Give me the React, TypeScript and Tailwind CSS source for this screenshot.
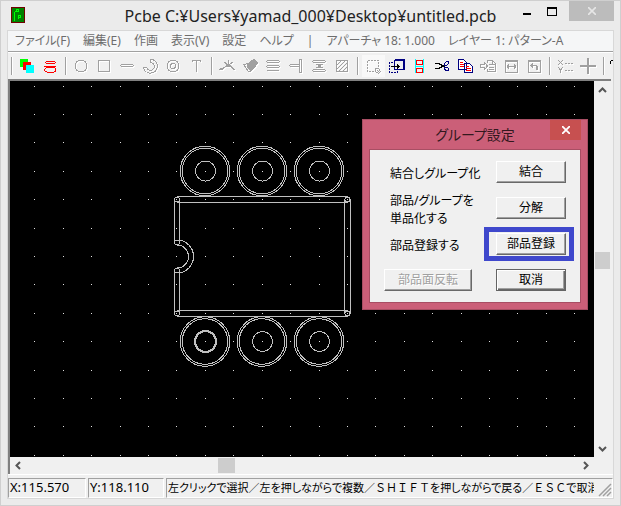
import type { ReactNode } from "react";

const MENUS = ["ファイル(F)", "編集(E)", "作画", "表示(V)", "設定", "ヘルプ"];

// Grid points every 2.54mm at the current zoom.
const GRID = Array.from({ length: 20 }, (_, i) => Math.floor(34.8 + 28.42 * i) - 10);
const GRID_ROWS = Array.from({ length: 14 }, (_, i) => Math.floor(5 + 28.4 * i));

const PAD_X = [195, 252, 309];

export default function App() {
  return (
    <div className="flex min-h-screen flex-col border border-[#cfcfcf] bg-[#ebebeb] px-1.5 pb-1.5 font-['Noto_Sans','Noto_Sans_CJK_JP',sans-serif] text-xs [font-feature-settings:'palt']">
      <TitleBar />
      <main className="flex flex-1 flex-col border border-[#d8d8d8] bg-[#f0f0f0]">
        <MenuBar />
        <Toolbar />
        <section className="mr-0.5 flex flex-1 flex-col border-t-2 border-l-2 border-[#808080]">
          <div className="flex flex-1">
            <Board />
            <VerticalScroll />
          </div>
          <HorizontalScroll />
        </section>
        <StatusBar />
      </main>
    </div>
  );
}

function TitleBar() {
  return (
    <header className="relative flex h-[29px] items-center justify-center">
      <svg className="absolute top-1.5 left-1 h-4 w-3.5" viewBox="0 0 14 16" shapeRendering="crispEdges">
        <rect width="14" height="16" fill="#700000" />
        <rect x="1" y="1" width="12" height="14" fill="#008000" />
        <g fill="none" stroke="#00ff00">
          <path d="M3.5 14V5.5L5.5 3.5M5.5 2.5h2v2h-2zM7.5 12V8.5h2v2h-2" />
        </g>
      </svg>
      <h1 className="text-base whitespace-nowrap text-[#222]">Pcbe C:¥Users¥yamad_000¥Desktop¥untitled.pcb</h1>
      <div className="absolute top-0 right-0 flex h-5 text-black">
        <button aria-label="最小化" className="flex w-6 justify-center">
          <svg className="h-5 w-3" viewBox="0 0 12 20" shapeRendering="crispEdges">
            <rect x="4" y="12" width="8" height="2" />
          </svg>
        </button>
        <button aria-label="最大化" className="mr-1 flex w-7 justify-center">
          <svg className="h-5 w-3" viewBox="0 0 12 20" shapeRendering="crispEdges">
            <path d="M2 6h10v9H2zM3 8v6h8V8z" fillRule="evenodd" />
          </svg>
        </button>
        <button aria-label="閉じる" className="flex w-[45px] items-center justify-center bg-[#bcbcbc]">
          <svg className="size-2" viewBox="0 0 8 8" stroke="#e6e6e6" strokeWidth="1.6">
            <path d="M0 0l8 8M8 0L0 8" />
          </svg>
        </button>
      </div>
    </header>
  );
}

function MenuBar() {
  return (
    <nav className="flex h-5 items-center gap-[13px] overflow-hidden bg-[#f5f6f7] pl-[7px] whitespace-nowrap text-[#6d6d6d]">
      {MENUS.map((m) => (
        <button key={m}>{m}</button>
      ))}
      <span>|</span>
      <button>アパーチャ 18: 1.000</button>
      <button>レイヤー 1: パターン-A</button>
    </nav>
  );
}

function Toolbar() {
  return (
    <div role="toolbar" className="flex h-7 items-center overflow-hidden border-t border-[#a0a0a0] shadow-[inset_0_1px_0_#fff]">
      <Sep />
      <Tool label="レイヤー">
        <rect x="4" y="4" width="8" height="8" fill="#00ff00" stroke="none" />
        <rect x="7" y="7" width="8" height="8" fill="#ff0000" stroke="none" />
        <rect x="10" y="10" width="8" height="8" fill="#00ffff" stroke="none" />
      </Tool>
      <Tool label="アパーチャ">
        <path
          stroke="#ff0000"
          d="M7 6.5h9M6 7.5h1M16 7.5h1M7 8.5h9M5 11.5h12M7 12.5h9M5.5 14v2M16.5 14v2M6 13.5h1M16 13.5h1M6 16.5h2M15 16.5h2M8 17.5h7"
        />
      </Tool>
      <Sep />
      <Tool label="円" off>
        <circle cx="11" cy="11" r="6" />
      </Tool>
      <Tool label="四角" off>
        <path d="M5.5 5.5h11v11h-11z" />
      </Tool>
      <Tool label="線" off>
        <path d="M5 9.5h12M5 11.5h12M4.5 10v1M17.5 10v1" />
      </Tool>
      <Tool label="円弧" off>
        <path d="M11.5 4.5h2a7 7 0 1 1 -9 8h3a4 4 0 1 0 5 -5h-1z" />
      </Tool>
      <Tool label="ランド" off>
        <circle cx="11" cy="11" r="6" />
        <circle cx="11" cy="11" r="2.5" />
      </Tool>
      <Tool label="文字" off>
        <path d="M7 5.5h9M11.5 5v12M7.5 6v1M15.5 6v1" />
      </Tool>
      <Sep />
      <Tool label="切断" off>
        <path d="M3 14.5h4M4 13.5h4M7 12.5h2M9 11.5h7M10 10.5h5M11 9.5h3M12.5 5v5M15 12.5h2M16 13.5h2M17 14.5h2M8 7l4 3M17 7l-4 3" />
      </Tool>
      <Tool label="消去" off>
        <path fill="currentColor" d="M9 9l6 -5 4 4 -7 8 -4 -4z" />
        <path d="M4.5 9.5l5 -1 2 5 0 3 -2 0z" />
      </Tool>
      <Tool label="平行線" off>
        <path d="M5 5.5h12M5 7.5h12M5 10.5h12M5 12.5h12M5 15.5h12M4.5 6v1M17.5 6v1M4.5 11v1M17.5 11v1" />
      </Tool>
      <Tool label="直角" off>
        <path d="M14.5 4.5h2v13h-2zM5 9.5h9M5 11.5h9M4.5 10v1" />
      </Tool>
      <Tool label="間隔" off>
        <path d="M5 5.5h12M5 7.5h12M4.5 6v1M17.5 6v1M5 14.5h12M5 16.5h12M4.5 15v1M17.5 15v1M8 9.5h7M10 10.5h3M10 11.5h3M8 12.5h7" />
      </Tool>
      <Tool label="塗り" off>
        <path d="M5.5 5.5h11v11h-11zM6 10l4 -4M6 14l8 -8M8 16l8 -8M12 16l4 -4" />
      </Tool>
      <Sep />
      <Tool label="選択" off pressed>
        <path strokeDasharray="2 1" d="M5.5 5.5h11v8M5.5 5.5v11h7" />
        <path d="M13.5 13.5h3l2 3 -2 2 -3 -2zM15 15l3 3" />
      </Tool>
      <Tool label="移動">
        <path stroke="#000080" d="M9.5 5.5h9v9h-9zM10 4.5h9v10" />
        <path stroke="#000080" strokeDasharray="2 1" d="M8 7.5H4.5v10h8v-2" />
        <path stroke="#000" d="M6 11.5h9M12.5 9v5M13.5 10v3" />
      </Tool>
      <Tool label="グループ">
        <path stroke="#00ffff" d="M7.5 4v14M15.5 4v14M8 11.5h7" />
        <path stroke="#ff0000" d="M8.5 5.5h6v4h-6zM8.5 13.5h6v4h-6z" />
      </Tool>
      <Tool label="切り取り">
        <path stroke="#000" strokeWidth="1.5" d="M4 8.5h4l3 2 3 1M4 13.5h4l3 -2 3 -1" />
        <path stroke="#000080" d="M13.5 10.5v-2l2 -2h2v2l-2 2zM13.5 12.5h3l1 1v2h-3l-1 -2z" />
      </Tool>
      <Tool label="コピー">
        <path fill="#fff" stroke="#000080" d="M4.5 4.5h5l3 3v7h-8zM10.5 8.5h5l3 3v6h-8z" />
        <path stroke="#ff0000" d="M6 7.5h3M6 9.5h4M6 11.5h4M12 11.5h3M12 13.5h5M12 15.5h5" />
      </Tool>
      <Tool label="貼り付け" off>
        <path d="M3.5 9.5h4v-2l3 3.5 -3 3.5v-2h-4zM10.5 8v-2.5h5l3 3v8h-8v-3M12 9.5h3M12 12.5h5M12 14.5h5M15.5 6v3h3" />
      </Tool>
      <Tool label="左右反転" off>
        <path d="M5.5 5.5h12v12h-12zM5 6.5h13M7 11.5h9M8.5 9v5M14.5 9v5M7.5 10v3M15.5 10v3" />
      </Tool>
      <Tool label="回転" off>
        <path d="M5.5 5.5h12v12h-12zM5 6.5h13M7 10.5h7M8.5 9v3M9.5 8v5M14.5 11v4M13.5 10v5" />
      </Tool>
      <Sep />
      <Tool label="座標" off>
        <path d="M4 5l5 5M9 5l-5 5M4 12l2.5 3M9 12l-2.5 3v3" />
        <path strokeDasharray="2 1" d="M11 8.5h8M11 15.5h8" />
      </Tool>
      <Tool label="原点" off>
        <path strokeWidth="2" d="M3 11h16M11 3v16" />
      </Tool>
      <Sep />
      <Tool label="ズーム">
        <path stroke="#000" d="M3 5.5h4M2.5 6v3M7.5 6v3" />
      </Tool>
    </div>
  );
}

function Sep() {
  return <span className="mx-[3px] h-[18px] w-0.5 shrink-0 border-r border-l border-r-white border-l-[#a0a0a0]" />;
}

function Tool({
  label,
  off = false,
  pressed = false,
  children,
}: {
  label: string;
  off?: boolean;
  pressed?: boolean;
  children: ReactNode;
}) {
  return (
    <button aria-label={label} className={pressed ? "h-[22px] w-[23px] shrink-0 bg-[#f8f8f8]" : "h-[22px] w-[23px] shrink-0"}>
      <svg className="h-[22px] w-[23px]" viewBox="0 0 23 22" fill="none" shapeRendering="crispEdges">
        {off && (
          <g className="text-white" stroke="currentColor" transform="translate(1 1)">
            {children}
          </g>
        )}
        <g className="text-[#a0a0a0]" stroke="currentColor">
          {children}
        </g>
      </svg>
    </button>
  );
}

function Board() {
  return (
    <div className="relative min-h-[376px] min-w-0 flex-1 overflow-hidden bg-black">
      <svg className="absolute inset-0 size-full" fill="none" stroke="#c0c0c0" shapeRendering="crispEdges">
        <g fill="#e0e0e0" stroke="none">
          {GRID_ROWS.map((y) => GRID.map((x) => <rect key={`${x},${y}`} x={x} y={y} width="1" height="1" />))}
        </g>
        {PAD_X.map((x) => (
          <g key={x}>
            <Pad x={x} y={90} />
            <Pad x={x} y={260.5} />
          </g>
        ))}
        <circle cx="195.5" cy="260.5" r="11" />
        {/* package outline, drawn as 6px wide strokes */}
        <path d="M167 115.5h171M167 121.5h171M167 229.5h171M167 235.5h171M334.5 118v115M340.5 118v115" />
        <path d="M164.5 118v44M169.5 118v44M164.5 189v44M169.5 189v44" />
        <circle cx="167" cy="118.5" r="2.5" />
        <circle cx="337.5" cy="118.5" r="2.5" />
        <circle cx="167" cy="232.5" r="2.5" />
        <circle cx="337.5" cy="232.5" r="2.5" />
        <circle cx="167" cy="161.5" r="2.5" />
        <circle cx="167" cy="189.5" r="2.5" />
        <path d="M167 159a16.5 16.5 0 0 1 0 33M167 164a11.5 11.5 0 0 1 0 23" />
      </svg>
      <GroupDialog />
    </div>
  );
}

function Pad({ x, y }: { x: number; y: number }) {
  return (
    <>
      <circle cx={x} cy={y} r="24.8" />
      <circle cx={x} cy={y} r="22.8" />
      <circle cx={x + 0.5} cy={y} r="10" />
    </>
  );
}

function GroupDialog() {
  return (
    <div
      role="dialog"
      aria-labelledby="group-title"
      className="absolute top-[38px] left-[352px] w-[226px] border border-[#a84e63] bg-[#cb5f78] px-1.5 pb-1.5"
    >
      <div className="relative flex h-[29px] items-center justify-center">
        <h2 id="group-title" className="text-sm text-[#33181e]">
          グループ設定
        </h2>
        <button aria-label="閉じる" className="absolute top-0 right-0 flex h-5 w-[31px] items-center justify-center bg-[#c75050]">
          <svg className="size-2" viewBox="0 0 8 8" stroke="#fff" strokeWidth="1.8">
            <path d="M0 0l8 8M8 0L0 8" />
          </svg>
        </button>
      </div>
      <div className="flex flex-col border border-[#a84e63] bg-[#f0f0f0] py-1 leading-[18px] text-black">
        <Row label="結合しグループ化">
          <DialogButton>結合</DialogButton>
        </Row>
        <Row
          label={
            <>
              部品/グループを
              <br />
              単品化する
            </>
          }
        >
          <DialogButton>分解</DialogButton>
        </Row>
        <Row label="部品登録する">
          <div className="relative">
            <DialogButton>部品登録</DialogButton>
            <span className="pointer-events-none absolute -top-1.5 -right-2 -bottom-1.5 -left-3 border-5 border-[#3f48cc]" />
          </div>
        </Row>
        <div className="flex h-9 items-center justify-between px-3.5">
          <button
            disabled
            className="flex h-[22px] w-[88px] items-center justify-center border border-t-white border-r-[#696969] border-b-[#696969] border-l-white text-[#a0a0a0] shadow-[inset_-1px_-1px_0_#a0a0a0] [text-shadow:1px_1px_0_#fff]"
          >
            部品面反転
          </button>
          <button className="flex h-[22px] w-[70px] items-center justify-center border border-[#646464] shadow-[inset_1px_1px_0_#fff,inset_-1px_-1px_0_#696969,inset_-2px_-2px_0_#a0a0a0]">
            取消
          </button>
        </div>
      </div>
    </div>
  );
}

function Row({ label, children }: { label: ReactNode; children: ReactNode }) {
  return (
    <div className="flex h-9 items-center justify-between pr-3.5 pl-5">
      <span className="pt-1 whitespace-nowrap">{label}</span>
      {children}
    </div>
  );
}

function DialogButton({ children }: { children: ReactNode }) {
  return (
    <button className="flex h-[22px] w-[70px] items-center justify-center border border-t-white border-r-[#696969] border-b-[#696969] border-l-white shadow-[inset_-1px_-1px_0_#a0a0a0]">
      {children}
    </button>
  );
}

function Chevron({ d }: { d: string }) {
  return (
    <svg className="size-[17px]" viewBox="0 0 17 17" fill="none" stroke="#555" strokeWidth="2">
      <path d={d} />
    </svg>
  );
}

function VerticalScroll() {
  return (
    <div className="flex w-[17px] flex-col items-center bg-[#f0f0f0]">
      <button aria-label="上へ">
        <Chevron d="M5 11l3.5 -3.5 3.5 3.5" />
      </button>
      <div className="flex-[154]" />
      <div className="h-[17px] w-[15px] bg-[#cdcdcd]" />
      <div className="flex-[171]" />
      <button aria-label="下へ">
        <Chevron d="M5 7l3.5 3.5 3.5 -3.5" />
      </button>
    </div>
  );
}

function HorizontalScroll() {
  return (
    <div className="mr-[17px] flex h-[17px] items-center bg-[#f0f0f0]">
      <button aria-label="左へ">
        <Chevron d="M10 5l-3.5 3.5 3.5 3.5" />
      </button>
      <div className="flex-[191]" />
      <div className="h-[15px] w-[17px] bg-[#cdcdcd]" />
      <div className="flex-[342]" />
      <button aria-label="右へ">
        <Chevron d="M7 5l3.5 3.5 -3.5 3.5" />
      </button>
    </div>
  );
}

function StatusBar() {
  return (
    <footer className="flex h-6 gap-0.5 border-t border-white pt-[3px] whitespace-nowrap text-black">
      <div className="flex h-5 w-[78px] items-center border border-t-[#a0a0a0] border-r-white border-b-white border-l-[#a0a0a0] pl-px text-[13px]">
        X:115.570
      </div>
      <div className="flex h-5 w-[76px] items-center border border-t-[#a0a0a0] border-r-white border-b-white border-l-[#a0a0a0] pl-px text-[13px]">
        Y:118.110
      </div>
      <div className="flex h-5 min-w-0 flex-1 items-center justify-between border border-t-[#a0a0a0] border-r-white border-b-white border-l-[#a0a0a0] pl-px">
        <span className="min-w-0 flex-1 overflow-hidden text-[11px]">
          左クリックで選択／左を押しながらで複数／<FullWidth>ＳＨＩＦＴ</FullWidth>を押しながらで戻る／<FullWidth>ＥＳＣ</FullWidth>で取消
        </span>
        <svg className="ml-1 h-4 w-3.5 self-end" viewBox="0 0 14 16" stroke="#a0a0a0" strokeWidth="1.5">
          <path d="M1 15L13 3M5 15l8 -8M9 15l4 -4" />
        </svg>
      </div>
    </footer>
  );
}

// Key names keep their full-width advance inside the proportional kana.
function FullWidth({ children }: { children: string }) {
  return <span className="[font-feature-settings:normal]">{children}</span>;
}
